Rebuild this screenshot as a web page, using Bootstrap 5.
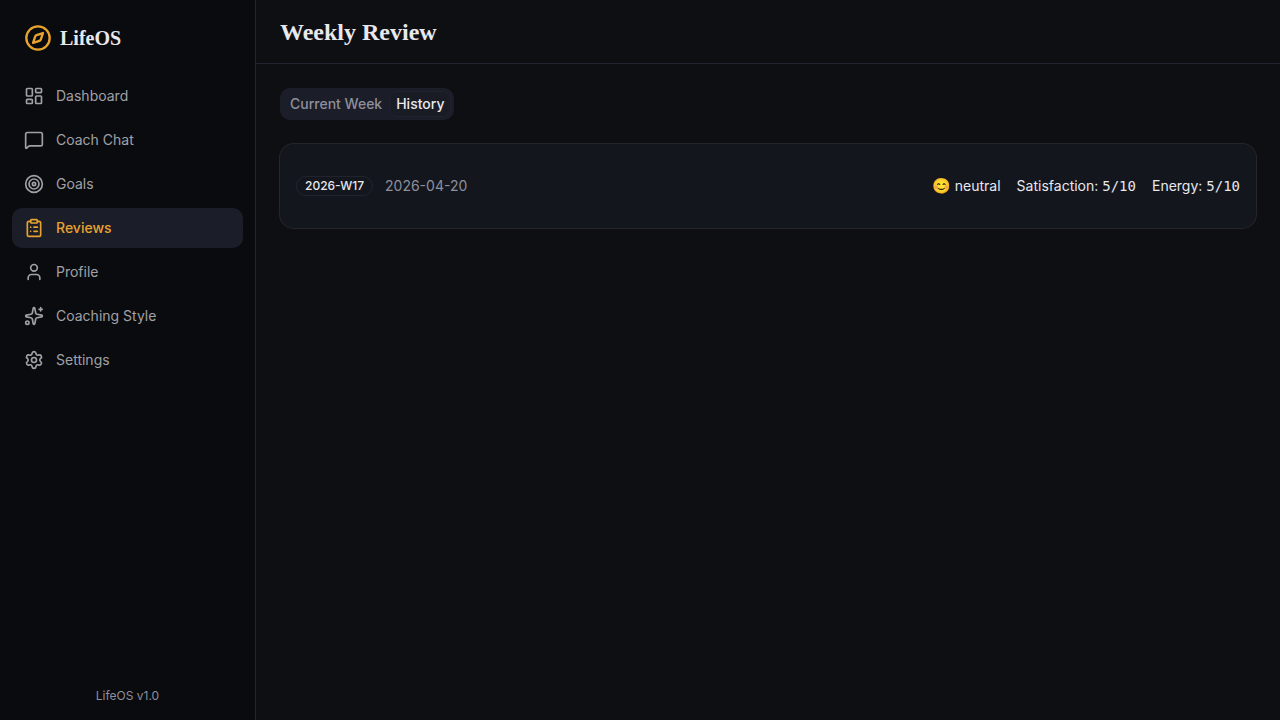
<!DOCTYPE html>
<html lang="en" data-bs-theme="dark">
<head>
<meta charset="utf-8">
<meta name="viewport" content="width=device-width, initial-scale=1">
<title>LifeOS – Weekly Review</title>
<link href="https://cdn.jsdelivr.net/npm/bootstrap@5.3.0/dist/css/bootstrap.min.css" rel="stylesheet">
<style>
  :root { --gold: #e8a32f; --line: #23242f; --raised: #1b1d28; --subtle: #8e8f9c; --ink: #e8e8ed; }
  body { background: #0e0f13; color: var(--ink); font: 400 14px/20px Inter, "Open Sans", sans-serif; }
  .sidebar { width: 256px; flex: none; background: #0a0b0e; border-right: 1px solid var(--line); }
  .serif { font-family: "Liberation Serif", serif; font-weight: 700; color: var(--ink); }
  .brand { padding: 24px; font-size: 20px; line-height: 28px; }
  .topbar { height: 64px; border-bottom: 1px solid var(--line); }
  .topbar h1 { font-size: 24px; line-height: 32px; }
  .icon { fill: none; stroke: currentColor; stroke-width: 2; stroke-linecap: round; stroke-linejoin: round; flex: none; }
  .brand .icon { color: var(--gold); }
  .side-nav { padding: 0 12px; }
  .side-nav .nav-link { color: #a0a1a6; padding: 10px 12px; border-radius: 10px; gap: 12px; }
  .side-nav .nav-link:hover { color: var(--ink); }
  .side-nav .nav-link.active { color: var(--gold); background: var(--raised); font-weight: 500; }
  .version { font-size: 12px; line-height: 16px; color: var(--subtle); }
  .tabs { background: var(--raised); border-radius: 10px; padding: 3px; height: 32px; }
  .tabs button { background: none; border: 1px solid transparent; border-radius: 8px; padding: 2px 6px; color: var(--subtle); font-weight: 500; }
  .tabs button.active { color: var(--ink); border-color: #20222e; background: #191b25; }
  .review { background: #13161d; border: 0; border-radius: 14px; box-shadow: 0 0 0 1px #24262b; padding: 32px 16px; }
  .week-row { gap: 12px; }
  .week { border: 1px solid #21242e; font-size: 12px; line-height: 16px; font-weight: 500; padding: 1px 8px; }
  .date { color: var(--subtle); }
  .emoji { font-size: 15px; }
  .score { font-family: "DejaVu Sans Mono", monospace; }
</style>
</head>
<body>
<div class="d-flex min-vh-100">
  <aside class="sidebar d-flex flex-column">
    <div class="brand serif d-flex align-items-center gap-2">
      <svg class="icon" width="28" height="28" viewBox="0 0 24 24" aria-hidden="true"><circle cx="12" cy="12" r="10"/><path d="m16.24 7.76-1.804 5.411a2 2 0 0 1-1.265 1.265L7.76 16.24l1.804-5.411a2 2 0 0 1 1.265-1.265z"/></svg>
      <span>LifeOS</span>
    </div>
    <nav class="side-nav nav flex-column gap-1" aria-label="Main">
      <a class="nav-link d-flex" href="#">
        <svg class="icon" width="20" height="20" viewBox="0 0 24 24" aria-hidden="true"><rect width="7" height="9" x="3" y="3" rx="1"/><rect width="7" height="5" x="14" y="3" rx="1"/><rect width="7" height="9" x="14" y="12" rx="1"/><rect width="7" height="5" x="3" y="16" rx="1"/></svg>
        Dashboard
      </a>
      <a class="nav-link d-flex" href="#">
        <svg class="icon" width="20" height="20" viewBox="0 0 24 24" aria-hidden="true"><path d="M22 17a2 2 0 0 1-2 2H6.828a2 2 0 0 0-1.414.586l-2.202 2.202A.71.71 0 0 1 2 21.286V5a2 2 0 0 1 2-2h16a2 2 0 0 1 2 2z"/></svg>
        Coach Chat
      </a>
      <a class="nav-link d-flex" href="#">
        <svg class="icon" width="20" height="20" viewBox="0 0 24 24" aria-hidden="true"><circle cx="12" cy="12" r="10"/><circle cx="12" cy="12" r="6"/><circle cx="12" cy="12" r="2"/></svg>
        Goals
      </a>
      <a class="nav-link d-flex active" href="#" aria-current="page">
        <svg class="icon" width="20" height="20" viewBox="0 0 24 24" aria-hidden="true"><rect width="8" height="4" x="8" y="2" rx="1"/><path d="M16 4h2a2 2 0 0 1 2 2v14a2 2 0 0 1-2 2H6a2 2 0 0 1-2-2V6a2 2 0 0 1 2-2h2M12 11h4M12 16h4M8 11h.01M8 16h.01"/></svg>
        Reviews
      </a>
      <a class="nav-link d-flex" href="#">
        <svg class="icon" width="20" height="20" viewBox="0 0 24 24" aria-hidden="true"><path d="M19 21v-2a4 4 0 0 0-4-4H9a4 4 0 0 0-4 4v2"/><circle cx="12" cy="7" r="4"/></svg>
        Profile
      </a>
      <a class="nav-link d-flex" href="#">
        <svg class="icon" width="20" height="20" viewBox="0 0 24 24" aria-hidden="true"><path d="M11.017 2.814a1 1 0 0 1 1.966 0l1.051 5.558a2 2 0 0 0 1.594 1.594l5.558 1.051a1 1 0 0 1 0 1.966l-5.558 1.051a2 2 0 0 0-1.594 1.594l-1.051 5.558a1 1 0 0 1-1.966 0l-1.051-5.558a2 2 0 0 0-1.594-1.594l-5.558-1.051a1 1 0 0 1 0-1.966l5.558-1.051a2 2 0 0 0 1.594-1.594zM20 2v4M22 4h-4"/><circle cx="4" cy="20" r="2"/></svg>
        Coaching Style
      </a>
      <a class="nav-link d-flex" href="#">
        <svg class="icon" width="20" height="20" viewBox="0 0 24 24" aria-hidden="true"><path d="M9.671 4.136a2.34 2.34 0 0 1 4.659 0 2.34 2.34 0 0 0 3.319 1.915 2.34 2.34 0 0 1 2.33 4.033 2.34 2.34 0 0 0 0 3.831 2.34 2.34 0 0 1-2.33 4.033 2.34 2.34 0 0 0-3.319 1.915 2.34 2.34 0 0 1-4.659 0 2.34 2.34 0 0 0-3.32-1.915 2.34 2.34 0 0 1-2.33-4.033 2.34 2.34 0 0 0 0-3.831A2.34 2.34 0 0 1 6.35 6.051a2.34 2.34 0 0 0 3.319-1.915"/><circle cx="12" cy="12" r="3"/></svg>
        Settings
      </a>
    </nav>
    <div class="version text-center mt-auto p-3">LifeOS v1.0</div>
  </aside>
  <div class="flex-grow-1">
    <header class="topbar d-flex align-items-center px-4"><h1 class="serif m-0">Weekly Review</h1></header>
    <main class="p-4">
      <div class="tabs d-inline-flex" role="tablist" aria-label="Review period">
        <button type="button" role="tab" aria-selected="false">Current Week</button>
        <button type="button" role="tab" aria-selected="true" class="active">History</button>
      </div>
      <article class="review card flex-row flex-wrap justify-content-between align-items-center mt-4">
        <div class="week-row d-flex align-items-center">
          <span class="week rounded-pill">2026-W17</span>
          <span class="date">2026-04-20</span>
        </div>
        <div class="d-flex gap-3">
          <span><span class="emoji">😊</span> neutral</span>
          <span>Satisfaction: <span class="score">5/10</span></span>
          <span>Energy: <span class="score">5/10</span></span>
        </div>
      </article>
    </main>
  </div>
</div>
<script src="https://cdn.jsdelivr.net/npm/bootstrap@5.3.0/dist/js/bootstrap.bundle.min.js"></script>
</body>
</html>
